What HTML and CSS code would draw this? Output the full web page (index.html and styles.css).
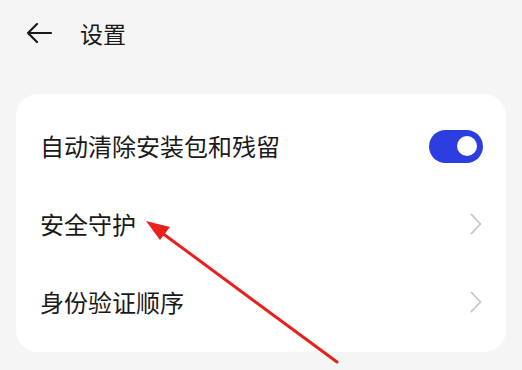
FILE: index.html
```html
<!DOCTYPE html>
<html lang="zh-CN">
<head>
    <meta charset="UTF-8">
    <meta name="viewport" content="width=device-width, initial-scale=1.0">
    <title>设置</title>
    <link rel="stylesheet" href="styles.css">
</head>
<body>
    <div class="header">
        <svg class="back" width="26" height="20" viewBox="0 0 26 20">
            <path d="M25 10H2M11 1L2 10l9 9" fill="none" stroke="#1a1a1a" stroke-width="2.2" stroke-linecap="round" stroke-linejoin="round"/>
        </svg>
        <div class="title">设置</div>
    </div>

    <div class="card">
        <div class="row">
            <span class="label">自动清除安装包和残留</span>
            <div class="toggle"><div class="knob"></div></div>
        </div>
        <div class="row">
            <span class="label">安全守护</span>
            <svg class="chevron" width="12" height="22" viewBox="0 0 12 22">
                <path d="M1.5 1.5l9 9.5-9 9.5" fill="none" stroke="#c6c6c6" stroke-width="1.8" stroke-linecap="round" stroke-linejoin="round"/>
            </svg>
        </div>
        <div class="row">
            <span class="label">身份验证顺序</span>
            <svg class="chevron" width="12" height="22" viewBox="0 0 12 22">
                <path d="M1.5 1.5l9 9.5-9 9.5" fill="none" stroke="#c6c6c6" stroke-width="1.8" stroke-linecap="round" stroke-linejoin="round"/>
            </svg>
        </div>
    </div>

    <!-- annotation arrow drawn over the screenshot -->
    <svg class="pointer" width="522" height="370" viewBox="0 0 522 370">
        <line x1="337" y1="362" x2="158" y2="230" stroke="#e8211c" stroke-width="3" stroke-linecap="round"/>
        <polygon points="146,221 170,227 160,240" fill="#e8211c"/>
    </svg>
</body>
</html>
```

FILE: styles.css
```css
body {
    margin: 0;
    background-color: #f5f5f5;
    font-family: "Noto Sans CJK SC", "Noto Sans", sans-serif;
    color: #1a1a1a;
    height: 370px;
    overflow: hidden;
    position: relative;
}

.header {
    display: flex;
    align-items: center;
    height: 66px;
    padding-left: 26px;
}

.back {
    margin-right: 28px;
}

.title {
    font-size: 23px;
    line-height: 1;
}

.card {
    margin: 28px 16px 0 16px;
    background-color: #fff;
    border-radius: 22px;
    padding: 13px 0 11px 0;
}

.row {
    display: flex;
    align-items: center;
    justify-content: space-between;
    height: 78px;
    padding: 0 23px 0 24px;
}

.label {
    font-size: 24px;
    line-height: 1;
}

.toggle {
    width: 54px;
    height: 33px;
    border-radius: 17px;
    background-color: #2d3ee0;
    display: flex;
    align-items: center;
    justify-content: flex-end;
    padding-right: 6px;
    box-sizing: border-box;
}

.knob {
    width: 20px;
    height: 20px;
    border-radius: 50%;
    background-color: #fff;
}

.chevron {
    margin-right: 1px;
}

.pointer {
    position: absolute;
    top: 0;
    left: 0;
}
```
